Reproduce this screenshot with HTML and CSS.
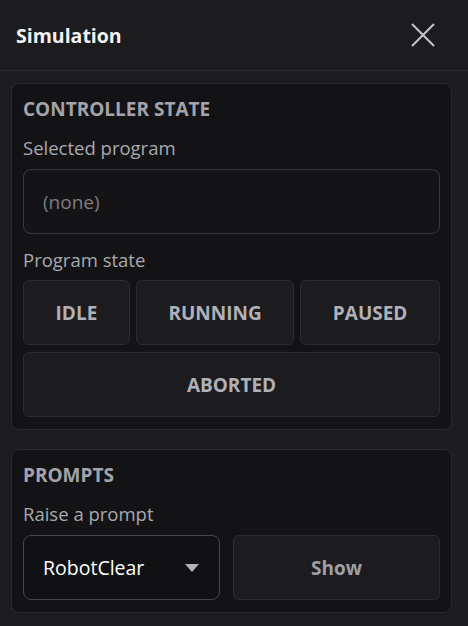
FILE: index.html
```html
<!DOCTYPE html>
<html lang="en">
<head>
<meta charset="utf-8">
<title>Simulation</title>
<link rel="stylesheet" href="styles.css">
</head>
<body>
<header class="header">
  <h1 class="title">Simulation</h1>
  <button class="close" aria-label="Close">
    <svg width="24" height="24" viewBox="0 0 24 24"><path d="M1 1 L23 23 M23 1 L1 23" stroke="#c4c4c8" stroke-width="2" fill="none"/></svg>
  </button>
</header>
<main class="content">
  <section class="panel">
    <h2 class="panel-title">CONTROLLER STATE</h2>
    <div class="label">Selected program</div>
    <div class="input">(none)</div>
    <div class="label label-spaced">Program state</div>
    <div class="state-row">
      <button class="btn">IDLE</button>
      <button class="btn">RUNNING</button>
      <button class="btn">PAUSED</button>
    </div>
    <div class="state-row">
      <button class="btn">ABORTED</button>
    </div>
  </section>
  <section class="panel">
    <h2 class="panel-title">PROMPTS</h2>
    <div class="label">Raise a prompt</div>
    <div class="prompt-row">
      <div class="select">
        <span>RobotClear</span>
        <span class="arrow"></span>
      </div>
      <button class="btn btn-show">Show</button>
    </div>
  </section>
</main>
</body>
</html>
```

FILE: styles.css
```css
* { box-sizing: border-box; }
html, body {
  margin: 0;
  background: #1c1c1f;
  font-family: "Open Sans", "Noto Sans", sans-serif;
  color: #a9a9ae;
}
.header {
  height: 71px;
  display: flex;
  align-items: center;
  justify-content: space-between;
  padding: 0 33px 0 16px;
  border-bottom: 1px solid #2a2a2d;
}
.title {
  margin: 0;
  font-size: 19.5px;
  font-weight: 700;
  color: #f2f2f4;
}
.close {
  background: none;
  border: 0;
  padding: 0;
  width: 24px;
  height: 24px;
  display: flex;
}
.content {
  padding: 12px 16px 0 11px;
  display: flex;
  flex-direction: column;
  gap: 19px;
}
.panel {
  background: #131316;
  border: 1px solid #2a2a2d;
  border-radius: 8px;
  padding: 12px 11px 12px;
}
.panel-title {
  margin: 0 0 14px;
  font-size: 19px;
  line-height: 26px;
  font-weight: 700;
  color: #a3a3a9;
}
.label {
  font-size: 18.5px;
  line-height: 24px;
  margin-bottom: 9px;
  color: #a9a9ae;
}
.label-spaced { margin-top: 14px; margin-bottom: 8px; }
.input {
  height: 65px;
  border: 1px solid #3a3a3e;
  border-radius: 8px;
  background: #141417;
  padding: 0 19px;
  display: flex;
  align-items: center;
  font-size: 19px;
  color: #7d7d82;
}
.state-row {
  display: flex;
  gap: 6px;
}
.state-row + .state-row { margin-top: 7px; }
.btn {
  flex: 1 1 auto;
  height: 65px;
  background: #1c1c1f;
  border: 1px solid #2c2c30;
  border-radius: 6px;
  font-family: inherit;
  font-size: 19px;
  font-weight: 700;
  color: #b0b0b8;
  padding: 0 20px;
}
.prompt-row {
  display: flex;
  gap: 13px;
}
.select {
  width: 197px;
  height: 65px;
  border: 1px solid #46464b;
  border-radius: 8px;
  background: #111113;
  display: flex;
  align-items: center;
  justify-content: space-between;
  padding: 0 20px 0 19px;
  font-size: 19.5px;
  color: #ffffff;
}
.arrow {
  width: 0;
  height: 0;
  border-left: 7.5px solid transparent;
  border-right: 7.5px solid transparent;
  border-top: 8px solid #b4b4b8;
}
.btn-show {
  flex: 1 1 auto;
  color: #a0a0a4;
}
```
